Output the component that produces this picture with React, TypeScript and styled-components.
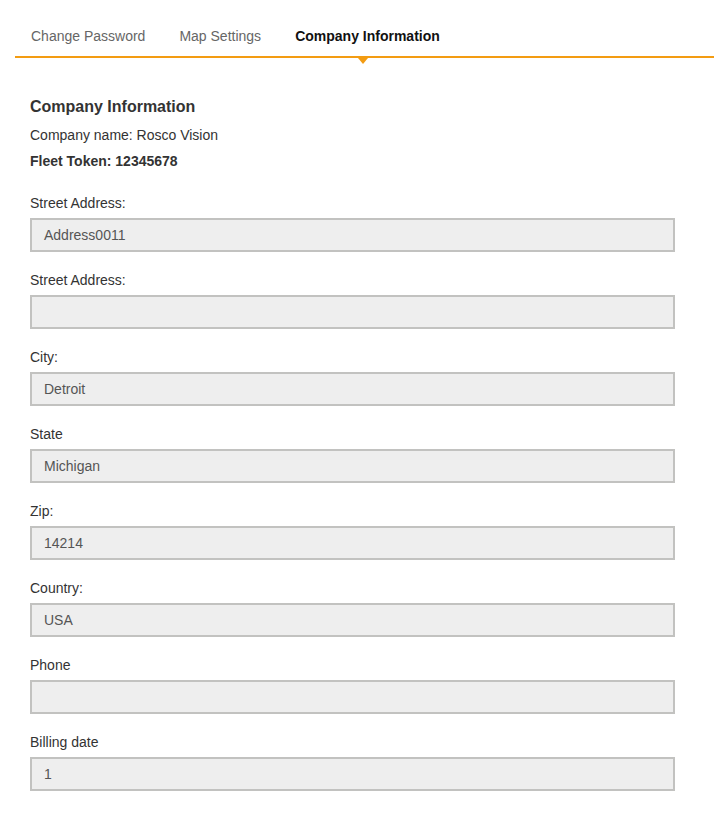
import React from "react";
import styled, { createGlobalStyle } from "styled-components";

const Global = createGlobalStyle`
  html, body { margin: 0; padding: 0; background: #fff; }
  body { font-family: "Liberation Sans", Arial, sans-serif; color: #333; }
`;

const Page = styled.div`
  width: 714px;
  padding-bottom: 26px;
`;

const TabBar = styled.div`
  display: flex;
  margin-left: 15px;
  border-bottom: 2px solid #f39c12;
  height: 56px;
`;

const Tab = styled.div<{ $active?: boolean }>`
  position: relative;
  padding: 26px 18px 0 16px;
  font-size: 14px;
  line-height: 20px;
  color: ${(p) => (p.$active ? "#111" : "#666")};
  font-weight: ${(p) => (p.$active ? 700 : 400)};
  white-space: nowrap;
  ${(p) =>
    p.$active &&
    `&::after {
      content: "";
      position: absolute;
      left: 50%;
      margin-left: -10px;
      bottom: -8px;
      border-left: 5px solid transparent;
      border-right: 5px solid transparent;
      border-top: 6px solid #f39c12;
    }`}
`;

const Content = styled.div`
  padding: 38px 0 0 30px;
  width: 645px;
`;

const Heading = styled.h2`
  margin: 0;
  font-size: 16px;
  line-height: 22px;
  font-weight: 700;
  color: #333;
`;

const Info = styled.div<{ $bold?: boolean }>`
  font-size: 14px;
  font-weight: ${(p) => (p.$bold ? 700 : 400)};
  line-height: 18px;
  margin-top: 8px;
  color: #333;
`;

const Fields = styled.div`
  display: flex;
  flex-direction: column;
  gap: 19px;
  margin-top: 24px;
`;

const Field = styled.div`
  display: flex;
  flex-direction: column;
`;

const Label = styled.label`
  font-size: 14px;
  line-height: 18px;
  color: #333;
  margin-bottom: 6px;
`;

const Input = styled.div`
  box-sizing: border-box;
  height: 34px;
  border: 2px solid #c2c2c0;
  background: #eeeeee;
  padding: 0 12px;
  font-size: 14px;
  line-height: 30px;
  color: #555;
`;

const fields: [string, string][] = [
  ["Street Address:", "Address0011"],
  ["Street Address:", ""],
  ["City:", "Detroit"],
  ["State", "Michigan"],
  ["Zip:", "14214"],
  ["Country:", "USA"],
  ["Phone", ""],
  ["Billing date", "1"],
];

export default function App() {
  return (
    <Page>
      <Global />
      <TabBar>
        <Tab>Change Password</Tab>
        <Tab>Map Settings</Tab>
        <Tab $active>Company Information</Tab>
      </TabBar>
      <Content>
        <Heading>Company Information</Heading>
        <Info>Company name: Rosco Vision</Info>
        <Info $bold>Fleet Token: 12345678</Info>
        <Fields>
          {fields.map(([l, v], i) => (
            <Field key={i}>
              <Label>{l}</Label>
              <Input>{v}</Input>
            </Field>
          ))}
        </Fields>
      </Content>
    </Page>
  );
}
